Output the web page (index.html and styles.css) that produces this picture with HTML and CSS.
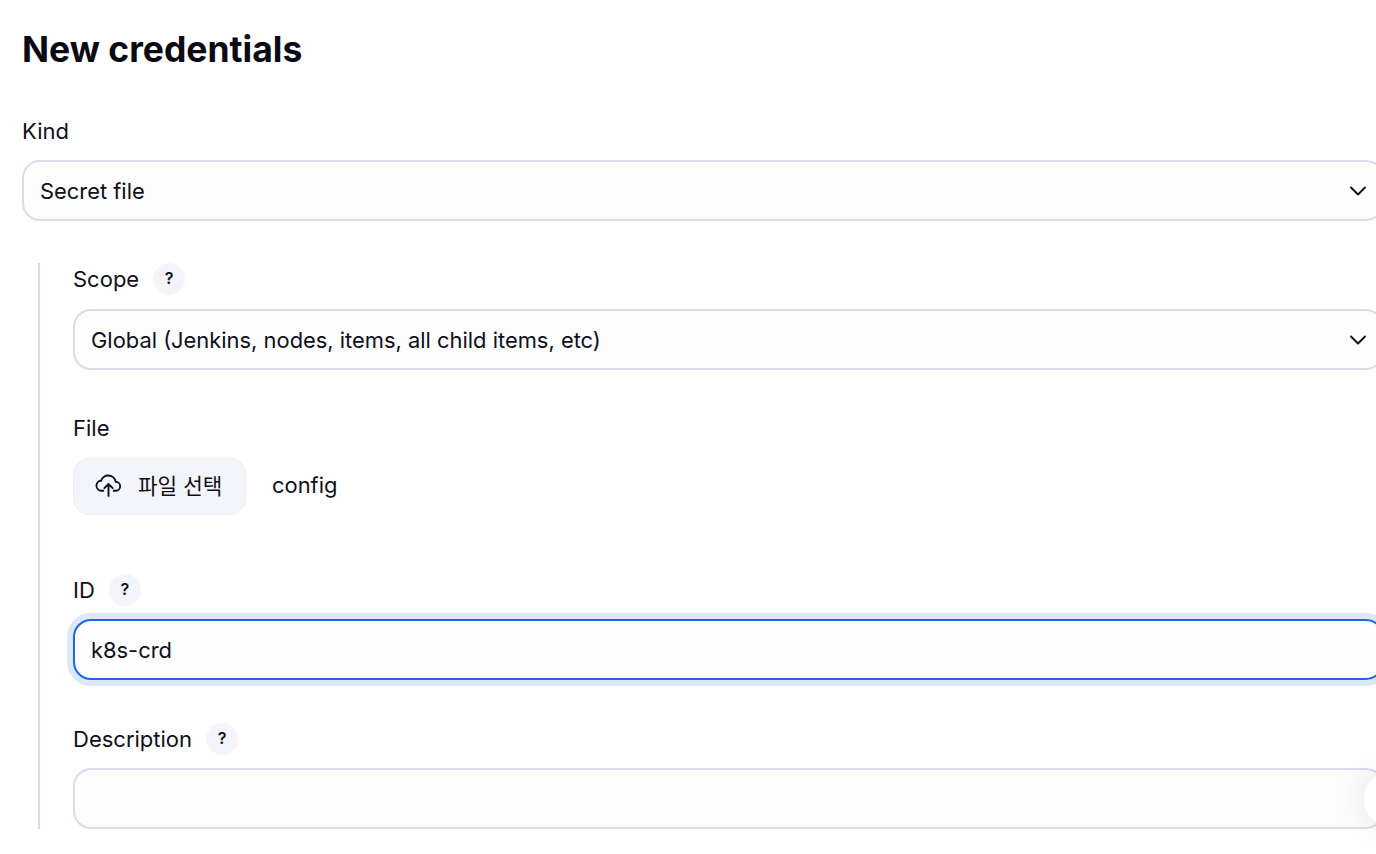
FILE: index.html
```html
<!DOCTYPE html>
<html lang="en">

<head>
    <meta charset="UTF-8">
    <meta name="viewport" content="width=device-width, initial-scale=1.0">
    <title>New credentials</title>
    <link rel="stylesheet" href="styles.css">
</head>

<body>

    <div class="page">
        <h1>New credentials</h1>

        <div class="kind-field">
            <div class="label-row">Kind</div>
            <div class="control">
                <span>Secret file</span>
                <svg class="chevron" viewBox="0 0 16 10" width="16" height="10" fill="none">
                    <path d="M1 1.5l7 7 7-7" stroke="#0f0f1a" stroke-width="1.9" stroke-linecap="round" stroke-linejoin="round" />
                </svg>
            </div>
        </div>

        <div class="nested">
            <div class="field">
                <div class="label-row">Scope <span class="help">?</span></div>
                <div class="control">
                    <span>Global (Jenkins, nodes, items, all child items, etc)</span>
                    <svg class="chevron" viewBox="0 0 16 10" width="16" height="10" fill="none">
                        <path d="M1 1.5l7 7 7-7" stroke="#0f0f1a" stroke-width="1.9" stroke-linecap="round" stroke-linejoin="round" />
                    </svg>
                </div>
            </div>

            <div class="file-field">
                <div class="label-row">File</div>
                <div class="file-row">
                    <div class="file-button">
                        <svg viewBox="0 0 26 24" width="27" height="25" fill="none" stroke="#0f0f1a" stroke-width="1.8" stroke-linecap="round" stroke-linejoin="round">
                            <path d="M8 18H6.500a4.800 4.800 0 0 1-.6-9.600 7.200 7.200 0 0 1 14 1 4.300 4.300 0 0 1 .1 8.600H18" />
                            <path d="M13 23V11.500M9 15.500l4-4 4 4" />
                        </svg>
                        <span class="file-button-text">파일 선택</span>
                    </div>
                    <span class="file-name">config</span>
                </div>
            </div>

            <div class="id-field">
                <div class="label-row">ID <span class="help">?</span></div>
                <div class="control focused">
                    <span>k8s-crd</span>
                </div>
            </div>

            <div class="desc-field">
                <div class="label-row">Description <span class="help">?</span></div>
                <div class="control"></div>
            </div>
        </div>
    </div>

    <div class="float-button"></div>

</body>

</html>
```

FILE: styles.css
```css
/* Basic styling */
html,
body {
    height: 100%;
}

body {
    font-family: 'Inter', 'Noto Sans CJK KR', sans-serif;
    font-size: 21.9px;
    background-color: #fff;
    color: #0f0f1a;
    margin: 0;
    overflow: hidden;
    position: relative;
}

.page {
    width: 1362px;
    padding: 28px 0 0 22px;
}

h1 {
    font-size: 35.500px;
    line-height: 44px;
    font-weight: 700;
    color: #0a0a14;
    margin: 0 0 44px;
}

.label-row {
    display: flex;
    align-items: center;
    gap: 14px;
    height: 32px;
    margin-bottom: 14px;
    font-size: 22px;
}

.kind-field .label-row {
    height: 30px;
    margin-bottom: 14px;
}

.control {
    box-sizing: border-box;
    height: 61px;
    display: flex;
    align-items: center;
    justify-content: space-between;
    padding: 0 16px;
    border: 2px solid #d8dcec;
    border-radius: 18px;
    background-color: #fdfdfe;
}

.chevron {
    flex: none;
}

.control.focused {
    border-color: #1a66e6;
    box-shadow: 0 0 0 6px #dce8fa;
}

.help {
    width: 32px;
    height: 32px;
    border-radius: 50%;
    background-color: #f3f5fa;
    display: flex;
    align-items: center;
    justify-content: center;
    font-size: 16px;
    font-weight: 600;
    padding-bottom: 3px;
    box-sizing: border-box;
}

.nested {
    margin: 42px 0 0 16px;
    padding-left: 33px;
    border-left: 2px solid #d8dcec;
}

.file-field {
    margin-top: 42px;
}

.file-field .label-row {
    margin-bottom: 14px;
}

.file-row {
    display: flex;
    align-items: center;
    gap: 26px;
}

.file-button {
    box-sizing: border-box;
    width: 173px;
    height: 57px;
    display: flex;
    align-items: center;
    gap: 16px;
    padding: 0 0 4px 21px;
    border: 1px solid #eceef5;
    border-radius: 16px;
    background-color: #f3f5fa;
}

.file-button-text {
    font-size: 21.300px;
}

.file-name {
    margin-bottom: 4px;
}

.id-field {
    margin-top: 59px;
}

.id-field .label-row {
    margin-bottom: 13px;
}

.desc-field {
    margin-top: 43px;
}

.desc-field .label-row {
    margin-bottom: 13px;
}

.float-button {
    position: absolute;
    left: 1364px;
    top: 771px;
    width: 56px;
    height: 56px;
    border-radius: 50%;
    background-color: #fff;
    box-shadow: 0 0 40px rgba(20, 20, 31, 0.1);
}
```
